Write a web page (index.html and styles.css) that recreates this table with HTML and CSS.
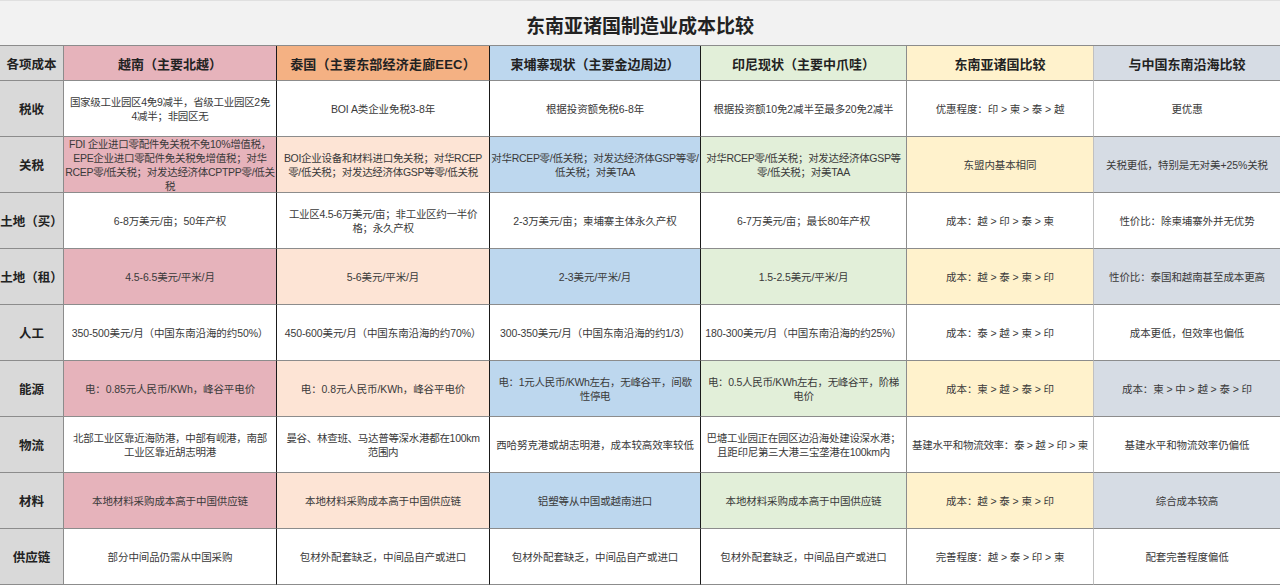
FILE: index.html
```html
<!DOCTYPE html>
<html lang="zh-CN">
<head>
<meta charset="utf-8">
<title>东南亚诸国制造业成本比较</title>
<link rel="stylesheet" href="styles.css">
</head>
<body>
<div class="sheet">
  <div class="title">东南亚诸国制造业成本比较</div>

  <div class="c k hd">各项成本</div>
  <div class="c vn hd">越南（主要北越）</div>
  <div class="c th hd thh">泰国（主要东部经济走廊EEC）</div>
  <div class="c kh hd">柬埔寨现状（主要金边周边）</div>
  <div class="c id hd">印尼现状（主要中爪哇）</div>
  <div class="c se hd">东南亚诸国比较</div>
  <div class="c cn hd">与中国东南沿海比较</div>

  <div class="c k">税收</div>
  <div class="c d m w vn">国家级工业园区4免9减半，省级工业园区2免<br>4减半；非园区无</div>
  <div class="c d w th">BOI A类企业免税3-8年</div>
  <div class="c d w kh">根据投资额免税6-8年</div>
  <div class="c d w id">根据投资额10免2减半至最多20免2减半</div>
  <div class="c d w se">优惠程度：印 &gt; 柬 &gt; 泰 &gt; 越</div>
  <div class="c d w cn">更优惠</div>

  <div class="c k">关税</div>
  <div class="c d m vn">FDI 企业进口零配件免关税不免10%增值税，<br>EPE企业进口零配件免关税免增值税；对华<br>RCEP零/低关税；对发达经济体CPTPP零/低关<br>税</div>
  <div class="c d m th">BOI企业设备和材料进口免关税；对华RCEP<br>零/低关税；对发达经济体GSP等零/低关税</div>
  <div class="c d m kh">对华RCEP零/低关税；对发达经济体GSP等零/<br>低关税；对美TAA</div>
  <div class="c d m id">对华RCEP零/低关税；对发达经济体GSP等<br>零/低关税；对美TAA</div>
  <div class="c d se">东盟内基本相同</div>
  <div class="c d cn">关税更低，特别是无对美+25%关税</div>

  <div class="c k">土地（买）</div>
  <div class="c d w vn">6-8万美元/亩；50年产权</div>
  <div class="c d m w th">工业区4.5-6万美元/亩；非工业区约一半价<br>格；永久产权</div>
  <div class="c d w kh">2-3万美元/亩；柬埔寨主体永久产权</div>
  <div class="c d w id">6-7万美元/亩；最长80年产权</div>
  <div class="c d w se">成本：越 &gt; 印 &gt; 泰 &gt; 柬</div>
  <div class="c d w cn">性价比：除柬埔寨外并无优势</div>

  <div class="c k">土地（租）</div>
  <div class="c d vn">4.5-6.5美元/平米/月</div>
  <div class="c d th">5-6美元/平米/月</div>
  <div class="c d kh">2-3美元/平米/月</div>
  <div class="c d id">1.5-2.5美元/平米/月</div>
  <div class="c d se">成本：越 &gt; 泰 &gt; 柬 &gt; 印</div>
  <div class="c d cn">性价比：泰国和越南甚至成本更高</div>

  <div class="c k">人工</div>
  <div class="c d w vn">350-500美元/月（中国东南沿海的约50%）</div>
  <div class="c d w th">450-600美元/月（中国东南沿海的约70%）</div>
  <div class="c d w kh">300-350美元/月（中国东南沿海的约1/3）</div>
  <div class="c d w id">180-300美元/月（中国东南沿海的约25%）</div>
  <div class="c d w se">成本：泰 &gt; 越 &gt; 柬 &gt; 印</div>
  <div class="c d w cn">成本更低，但效率也偏低</div>

  <div class="c k">能源</div>
  <div class="c d vn">电：0.85元人民币/KWh，峰谷平电价</div>
  <div class="c d th">电：0.8元人民币/KWh，峰谷平电价</div>
  <div class="c d m kh">电：1元人民币/KWh左右，无峰谷平，间歇<br>性停电</div>
  <div class="c d m id">电：0.5人民币/KWh左右，无峰谷平，阶梯<br>电价</div>
  <div class="c d se">成本：柬 &gt; 越 &gt; 泰 &gt; 印</div>
  <div class="c d cn">成本：柬 &gt; 中 &gt; 越 &gt; 泰 &gt; 印</div>

  <div class="c k">物流</div>
  <div class="c d m w vn">北部工业区靠近海防港，中部有岘港，南部<br>工业区靠近胡志明港</div>
  <div class="c d m w th">曼谷、林查班、马达普等深水港都在100km<br>范围内</div>
  <div class="c d w kh">西哈努克港或胡志明港，成本较高效率较低</div>
  <div class="c d m w id">巴塘工业园正在园区边沿海处建设深水港；<br>且距印尼第三大港三宝垄港在100km内</div>
  <div class="c d m w se">基建水平和物流效率：泰 &gt; 越 &gt; 印 &gt; 柬</div>
  <div class="c d w cn">基建水平和物流效率仍偏低</div>

  <div class="c k">材料</div>
  <div class="c d vn">本地材料采购成本高于中国供应链</div>
  <div class="c d th">本地材料采购成本高于中国供应链</div>
  <div class="c d kh">铝塑等从中国或越南进口</div>
  <div class="c d id">本地材料采购成本高于中国供应链</div>
  <div class="c d se">成本：越 &gt; 泰 &gt; 柬 &gt; 印</div>
  <div class="c d cn">综合成本较高</div>

  <div class="c k">供应链</div>
  <div class="c d w vn">部分中间品仍需从中国采购</div>
  <div class="c d w th">包材外配套缺乏，中间品自产或进口</div>
  <div class="c d w kh">包材外配套缺乏，中间品自产或进口</div>
  <div class="c d w id">包材外配套缺乏，中间品自产或进口</div>
  <div class="c d w se">完善程度：越 &gt; 泰 &gt; 印 &gt; 柬</div>
  <div class="c d w cn">配套完善程度偏低</div>
</div>
</body>
</html>
```

FILE: styles.css
```css
* { box-sizing: border-box; }
html, body { margin: 0; padding: 0; background: #ffffff; }
body {
  font-family: "Liberation Sans", "Noto Sans CJK SC", sans-serif;
  color: #333;
}
.sheet {
  display: grid;
  grid-template-columns: 64px 213px 213px 211px 206px 187px 186px;
  grid-template-rows: 46px 35px repeat(9, 56px);
  width: 1280px;
}
.title {
  grid-column: 1 / -1;
  background: #f2f2f2;
  border-top: 1px solid #e0e0e0;
  border-bottom: 1px solid #8c8c8c;
  display: flex;
  align-items: center;
  justify-content: center;
  font-size: 19px;
  font-weight: bold;
  color: #222;
  padding-top: 2px;
}
.c {
  display: flex;
  align-items: center;
  justify-content: center;
  text-align: center;
  border-bottom: 1px solid #8c8c8c;
  border-right: 1px solid #8c8c8c;
  padding: 0 3px;
  overflow: hidden;
}
.hd {
  font-size: 13px;
  font-weight: bold;
  color: #222;
}
.th.hd { letter-spacing: 0.2px; }
.k {
  background: #d9d9d9;
  font-size: 12.5px;
  font-weight: bold;
  color: #222;
  padding: 0 1px;
  white-space: nowrap;
}
.d {
  font-size: 10.5px;
  line-height: 14px;
  letter-spacing: -0.1px;
  color: #3a3a3a;
  padding: 0 1px;
}
.d.m {
  white-space: nowrap;
  letter-spacing: -0.3px;
  padding: 0;
}
.vn { background: #e6b3bb; border-right: 1.5px solid #1a1a1a; }
.th { background: #fde4d5; border-right: 1.5px solid #1a1a1a; }
.thh { background: #f4b183; }
.kh { background: #bdd7ee; border-right: 1.5px solid #1a1a1a; }
.id { background: #e2efd9; border-right: 1px solid #8c8c8c; }
.se { background: #fff2cc; border-right: 1px solid #c0c0c0; }
.cn { background: #d6dce4; border-right: none; }
.d.w { background: #ffffff; }
```
